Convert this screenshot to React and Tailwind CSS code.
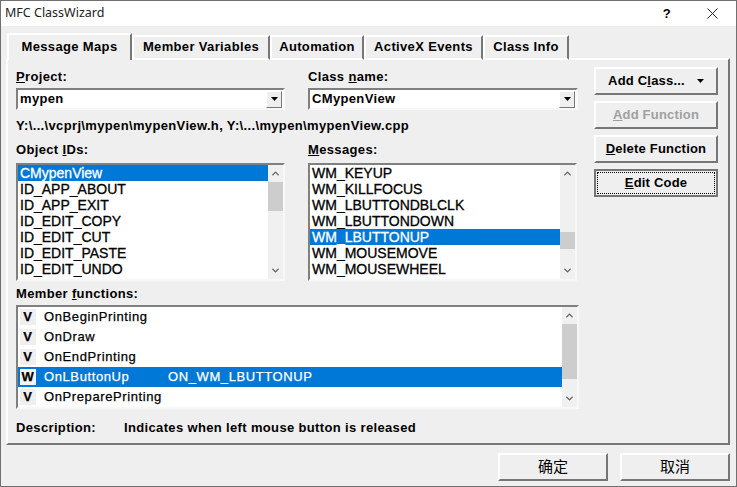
import { ChevronUp, ChevronDown } from 'lucide-react';

const tabs = ['Message Maps', 'Member Variables', 'Automation', 'ActiveX Events', 'Class Info'];
const tabWidths = ['w-[125px]', 'w-[138px]', 'w-[94px]', 'w-[119px]', 'w-[86px]'];

const objectIds = ['CMypenView', 'ID_APP_ABOUT', 'ID_APP_EXIT', 'ID_EDIT_COPY', 'ID_EDIT_CUT', 'ID_EDIT_PASTE', 'ID_EDIT_UNDO'];
const messages = ['WM_KEYUP', 'WM_KILLFOCUS', 'WM_LBUTTONDBLCLK', 'WM_LBUTTONDOWN', 'WM_LBUTTONUP', 'WM_MOUSEMOVE', 'WM_MOUSEWHEEL'];
const members = [
  { kind: 'V', name: 'OnBeginPrinting' },
  { kind: 'V', name: 'OnDraw' },
  { kind: 'V', name: 'OnEndPrinting' },
  { kind: 'W', name: 'OnLButtonUp', map: 'ON_WM_LBUTTONUP', selected: true },
  { kind: 'V', name: 'OnPreparePrinting' },
];

const sunken = 'border-2 border-t-[#808080] border-l-[#808080] border-r-[#f8f8f8] border-b-[#f8f8f8] bg-white';
const raised = 'border-2 border-t-white border-l-white border-r-[#767676] border-b-[#767676] bg-[#efefef]';

function Scrollbar({ spacerTop, thumb }) {
  return (
    <div className="flex h-full w-[15px] shrink-0 flex-col items-center bg-[#f0f0f0]">
      <div className="flex h-[17px] shrink-0 items-center justify-center">
        <ChevronUp size={11} strokeWidth={3} className="text-[#606060]" />
      </div>
      <div className="w-full flex-1">
        <div className={spacerTop} />
        <div className={`${thumb} w-full bg-[#cdcdcd]`} />
      </div>
      <div className="flex h-[17px] shrink-0 items-center justify-center">
        <ChevronDown size={11} strokeWidth={3} className="text-[#606060]" />
      </div>
    </div>
  );
}

function Combo({ value, width }) {
  return (
    <div className={`${sunken} ${width} flex h-[22px] items-center justify-between pl-[2px] pr-[1px]`}>
      <span className="font-bold">{value}</span>
      <span className="flex h-[17px] w-[16px] items-center justify-center border border-t-white border-l-white border-r-[#767676] border-b-[#767676] bg-[#efefef]">
        <svg width="7" height="4" viewBox="0 0 7 4"><path d="M0 0h7L3.5 4z" fill="#000" /></svg>
      </span>
    </div>
  );
}

function ListBox({ items, selected, width, spacerTop, thumb, rowPad }) {
  return (
    <div className={`${sunken} ${width} flex h-[118px] items-stretch`}>
      <div className="min-w-0 flex-1">
        {items.map((item) => (
          <div
            key={item}
            className={`h-[16px] ${rowPad} text-[14px] leading-[16px] tracking-normal [-webkit-text-stroke:0.3px] ${item === selected ? 'bg-[#0078d7] text-white' : 'text-black'}`}
          >
            {item}
          </div>
        ))}
      </div>
      <Scrollbar spacerTop={spacerTop} thumb={thumb} />
    </div>
  );
}

function SideButton({ children, disabled, focused }) {
  return (
    <div className={`flex h-[28px] w-[124px] items-center justify-center font-bold tracking-[0.2px] ${focused ? 'border-2 border-[#767676] bg-[#efefef]' : raised} ${disabled ? 'text-[#a0a0a0]' : 'text-black'}`}>
      {focused ? (
        <span className="flex h-[22px] w-[118px] items-center justify-center border border-dotted border-black">{children}</span>
      ) : children}
    </div>
  );
}

export default function App() {
  return (
    <div className="flex h-[487px] w-[737px] flex-col overflow-hidden border border-[#707070] bg-[#efefef] text-[13px] tracking-[0.35px] text-black [font-family:'Liberation_Sans',sans-serif]">
      {/* Title bar */}
      <div className="flex h-[25px] shrink-0 items-center justify-between bg-white pl-[4px] pr-[18px]">
        <span className="text-[12.5px] tracking-normal text-[#222] [font-family:'Noto_Sans',sans-serif]">MFC ClassWizard</span>
        <div className="flex items-center gap-[36px]">
          <span className="text-[13px] font-semibold">?</span>
          <svg width="11" height="11" viewBox="0 0 11 11"><path d="M.5.5l10 10M10.5.5l-10 10" stroke="#222" strokeWidth="1" /></svg>
        </div>
      </div>

      <div className="flex flex-1 flex-col px-[5px] pt-[7px]">
        {/* Tabs */}
        <div className="relative z-10 -mb-[2px] flex h-[27px] items-end pl-[1px]">
          {tabs.map((tab, i) => (
            <div
              key={tab}
              className={`${tabWidths[i]} flex items-center justify-center border-l-2 border-r-2 border-t-2 border-l-white border-r-[#767676] border-t-white pb-[2px] font-bold ${i === 0 ? 'h-[27px] bg-[#efefef]' : 'h-[25px] border-b-2 border-b-white'}`}
            >
              {tab}
            </div>
          ))}
        </div>

        {/* Panel */}
        <div className="flex h-[387px] w-[724px] shrink-0 gap-[12px] border-2 border-t-white border-l-white border-r-[#767676] border-b-[#767676] pl-[8px] pt-[7px]">
          <div className="w-[566px]">
            <div className="flex gap-[23px]">
              <div>
                <div className="h-[21px] font-bold"><u>P</u>roject:</div>
                <Combo value="mypen" width="w-[269px]" />
              </div>
              <div>
                <div className="h-[21px] font-bold">Class <u>n</u>ame:</div>
                <Combo value="CMypenView" width="w-[270px]" />
              </div>
            </div>
            <div className="mt-[6px] h-[19px] font-bold">Y:\...\vcprj\mypen\mypenView.h, Y:\...\mypen\mypenView.cpp</div>
            <div className="flex gap-[23px]">
              <div>
                <div className="h-[28px] pt-[5px] font-bold">Object <u>I</u>Ds:</div>
                <ListBox items={objectIds} selected="CMypenView" width="w-[269px]" spacerTop="h-0" thumb="h-[29px]" rowPad="pl-[2px]" />
              </div>
              <div>
                <div className="h-[28px] pt-[5px] font-bold"><u>M</u>essages:</div>
                <ListBox items={messages} selected="WM_LBUTTONUP" width="w-[269px]" spacerTop="h-[50px]" thumb="h-[17px]" rowPad="pl-[2px]" />
              </div>
            </div>
            <div className="h-[24px] pt-[3px] font-bold">Member <u>f</u>unctions:</div>
            <div className={`${sunken} flex h-[104px] w-[563px] items-stretch`}>
              <div className="min-w-0 flex-1">
                {members.map((m) => (
                  <div key={m.name} className={`flex h-[20px] items-center pl-[2px] tracking-[0.6px] [-webkit-text-stroke:0.25px] ${m.selected ? 'bg-[#0078d7] text-white' : ''}`}>
                    <span className={`flex h-[16px] w-[16px] shrink-0 items-center justify-center font-bold text-black ${m.selected ? 'bg-[#f4f4f4]' : 'bg-[#efefef]'}`}>{m.kind}</span>
                    <span className="ml-[8px] w-[124px] shrink-0">{m.name}</span>
                    {m.map && <span>{m.map}</span>}
                  </div>
                ))}
              </div>
              <Scrollbar spacerTop="h-0" thumb="h-[55px]" />
            </div>
            <div className="mt-[9px] flex font-bold">
              <span className="w-[108px] shrink-0">Description:</span>
              <span>Indicates when left mouse button is released</span>
            </div>
          </div>

          <div className="flex flex-col gap-[6px]">
            <SideButton>
              <span>Add C<u>l</u>ass...</span>
              <svg className="ml-[12px]" width="7" height="4" viewBox="0 0 7 4"><path d="M0 0h7L3.5 4z" fill="#000" /></svg>
            </SideButton>
            <SideButton disabled><span><u>A</u>dd Function</span></SideButton>
            <SideButton><span><u>D</u>elete Function</span></SideButton>
            <SideButton focused><span><u>E</u>dit Code</span></SideButton>
          </div>
        </div>

        {/* Footer buttons */}
        <div className="mt-[8px] flex justify-end gap-[12px] pr-[1px] text-[15px] tracking-normal [font-family:'Noto_Sans_CJK_SC',sans-serif]">
          <div className={`${raised} flex h-[28px] w-[110px] items-center justify-center pb-[2px]`}>确定</div>
          <div className={`${raised} flex h-[28px] w-[110px] items-center justify-center pb-[2px]`}>取消</div>
        </div>
      </div>
    </div>
  );
}
